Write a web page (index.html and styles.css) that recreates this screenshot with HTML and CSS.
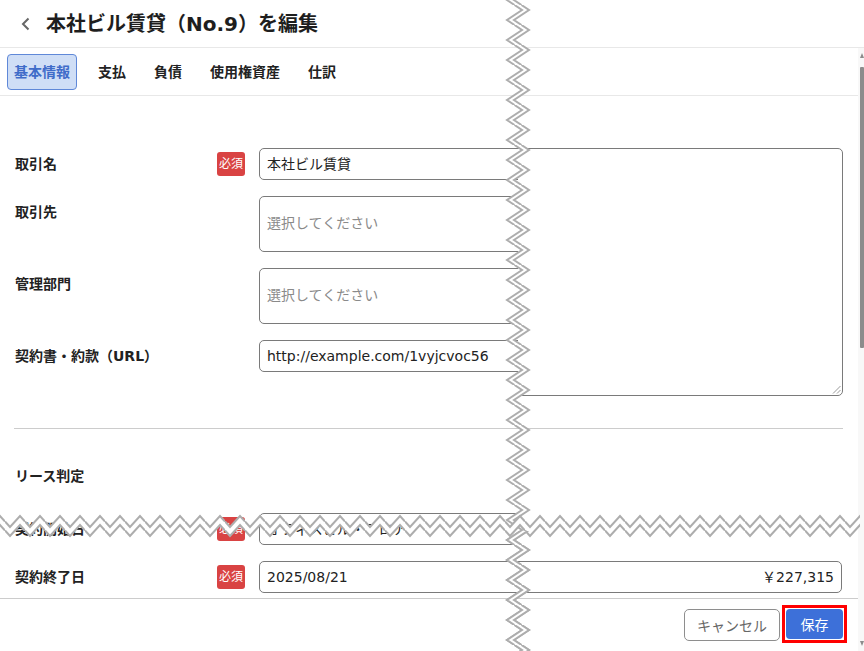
FILE: index.html
```html
<!DOCTYPE html>
<html lang="ja">
<head>
<meta charset="utf-8">
<title>本社ビル賃貸（No.9）を編集</title>
<link rel="stylesheet" href="styles.css">
</head>
<body>
<div class="page">
  <header class="header">
    <svg class="back" width="10" height="14" viewBox="0 0 10 14"><polyline points="7.5,1.5 2,7 7.5,12.5" fill="none" stroke="#666" stroke-width="2"/></svg>
    <h1 class="title">本社ビル賃貸（No.9）を編集</h1>
  </header>
  <div class="body">
    <div class="main">
      <nav class="tabs">
        <span class="tab active">基本情報</span>
        <span class="tab">支払</span>
        <span class="tab">負債</span>
        <span class="tab">使用権資産</span>
        <span class="tab">仕訳</span>
      </nav>
      <div class="form">
        <div class="slice left">
          <div class="row">
            <div class="label">取引名</div>
            <div class="req"><span class="badge">必須</span></div>
            <div class="field">本社ビル賃貸</div>
          </div>
          <div class="row">
            <div class="label">取引先</div>
            <div class="req"></div>
            <div class="field tall placeholder">選択してください</div>
          </div>
          <div class="row">
            <div class="label">管理部門</div>
            <div class="req"></div>
            <div class="field tall placeholder">選択してください</div>
          </div>
          <div class="row">
            <div class="label">契約書・約款（URL）</div>
            <div class="req"></div>
            <div class="field">http://example.com/1vyjcvoc56</div>
          </div>
          <div class="divider"></div>
          <h2 class="section">リース判定</h2>
          <div class="row first">
            <div class="label">契約開始日</div>
            <div class="req"><span class="badge">必須</span></div>
            <div class="field">オフィスビル・フロア</div>
          </div>
          <div class="row">
            <div class="label">契約終了日</div>
            <div class="req"><span class="badge">必須</span></div>
            <div class="field">2025/08/21</div>
          </div>
        </div>
        <div class="slice right">
          <div class="textarea">
            <svg class="resize" width="9" height="9" viewBox="0 0 9 9"><line x1="1" y1="8.5" x2="8.5" y2="1" stroke="#999" stroke-width="1"/><line x1="5" y1="8.5" x2="8.5" y2="5" stroke="#999" stroke-width="1"/></svg>
          </div>
          <div class="divider short"></div>
          <div class="field amount">￥227,315</div>
        </div>
      </div>
      <footer class="footer">
        <button class="btn cancel" type="button">キャンセル</button>
        <span class="focus-ring"><button class="btn save" type="button">保存</button></span>
      </footer>
    </div>
    <div class="scrollbar">
      <div class="arrow up"></div>
      <div class="thumb"></div>
      <div class="track-rest"></div>
      <div class="arrow down"></div>
    </div>
  </div>
  <svg class="tears" width="864" height="651" viewBox="0 0 864 651">
    <defs>
      <pattern id="vz" patternUnits="userSpaceOnUse" x="0" y="5" width="864" height="20">
        <polygon points="514.5,0 522,5 507,15 514.5,20 521.5,20 514,15 529,5 521.5,0" fill="#fff"/>
        <polyline points="514.5,0 522,5 507,15 514.5,20" fill="none" stroke="#adadad" stroke-width="2"/>
        <polyline points="521.5,0 529,5 514,15 521.5,20" fill="none" stroke="#adadad" stroke-width="2"/>
      </pattern>
      <pattern id="hz" patternUnits="userSpaceOnUse" x="5" y="0" width="20" height="651">
        <polygon points="0,521.5 5,527 15,516 20,521.5 20,530.5 15,525 5,536 0,530.5" fill="#fff"/>
        <polyline points="0,521.5 5,527 15,516 20,521.5" fill="none" stroke="#adadad" stroke-width="2"/>
        <polyline points="0,530.5 5,536 15,525 20,530.5" fill="none" stroke="#adadad" stroke-width="2"/>
      </pattern>
    </defs>
    <rect x="500" y="0" width="36" height="651" fill="url(#vz)"/>
    <rect x="0" y="508" width="860" height="34" fill="url(#hz)"/>
    <rect x="500" y="531" width="36" height="120" fill="url(#vz)"/>
  </svg>
</div>
</body>
</html>
```

FILE: styles.css
```css
* {
  box-sizing: border-box;
  margin: 0;
  padding: 0;
}

html,
body {
  width: 864px;
  height: 651px;
  overflow: hidden;
  background: #fff;
}

body {
  font-family: "DejaVu Sans", "Noto Sans CJK JP", sans-serif;
  font-size: 14px;
  color: #222;
}

.page {
  position: relative;
  width: 864px;
  height: 651px;
}

/* header */
.header {
  height: 48px;
  border-bottom: 1px solid #e8e8e8;
  display: flex;
  align-items: center;
  padding-left: 21px;
}

.back {
  display: block;
  flex: none;
  margin-right: 15px;
}

.title {
  font-size: 20px;
  font-weight: 700;
  line-height: 28px;
  color: #1e1e1e;
}

/* body */
.body {
  display: flex;
  height: 603px;
}

.main {
  width: 858px;
  flex: none;
  display: flex;
  flex-direction: column;
}

.tabs {
  height: 48px;
  flex: none;
  border-bottom: 1px solid #e8e8e8;
  display: flex;
  gap: 14px;
  padding: 6px 7px 0;
}

.tab {
  height: 36px;
  padding: 0 6px;
  border: 1px solid transparent;
  border-radius: 4px;
  font-weight: 700;
  line-height: 34px;
  color: #222;
}

.tab.active {
  background: #cfdef6;
  border-color: #5f88d8;
  color: #3f6cc9;
}

.form {
  flex: 1;
  min-height: 0;
  display: flex;
  overflow: hidden;
}

.slice {
  flex: none;
  overflow: hidden;
}

.slice.left {
  width: 518px;
  padding: 52px 0 0 15px;
}

.slice.right {
  width: 340px;
  padding-top: 52px;
}

.row {
  display: grid;
  grid-template-columns: 202px 42px 583px;
  margin-bottom: 16px;
}

.row.first {
  margin-top: 27px;
}

.label {
  font-weight: 700;
  line-height: 32px;
  color: #222;
  white-space: nowrap;
}

.badge {
  display: block;
  width: 28px;
  height: 24px;
  margin-top: 4px;
  border-radius: 3px;
  background: #d94343;
  color: #fff;
  font-size: 12px;
  line-height: 24px;
  text-align: center;
}

.field {
  height: 32px;
  border: 1px solid #7a7a7a;
  border-radius: 5px;
  padding: 0 7px;
  line-height: 30px;
  color: #222;
  white-space: nowrap;
  overflow: hidden;
}

.field.tall {
  height: 56px;
  display: flex;
  align-items: center;
  padding-bottom: 3px;
}

.placeholder {
  color: #8a8a8a;
}

.divider {
  height: 1px;
  width: 829px;
  margin: 56px 0 0 -1px;
  background: #cccccc;
}

.section {
  margin-top: 37px;
  font-size: 14px;
  font-weight: 700;
  line-height: 20px;
  color: #222;
}

.textarea {
  position: relative;
  margin-left: -20px;
  width: 345px;
  height: 248px;
  border: 1px solid #7a7a7a;
  border-radius: 5px;
}

.resize {
  position: absolute;
  right: 1px;
  bottom: 1px;
  display: block;
}

.divider.short {
  width: 325px;
  margin: 32px 0 0 0;
}

.field.amount {
  margin-top: 132px;
  margin-left: -20px;
  width: 344px;
  text-align: right;
}

/* footer */
.footer {
  height: 53px;
  flex: none;
  border-top: 1px solid #cccccc;
  display: flex;
  justify-content: flex-end;
  align-items: flex-start;
  gap: 2px;
  padding: 6px 11px 0;
}

.btn {
  font-family: "DejaVu Sans", "Noto Sans CJK JP", sans-serif;
  font-size: 14px;
  cursor: pointer;
}

.btn.cancel {
  width: 96px;
  height: 32px;
  margin-top: 4px;
  border: 1px solid #8e8e8e;
  border-radius: 5px;
  background: #fff;
  color: #666;
}

.focus-ring {
  display: block;
  border: 3px solid #ff0000;
  padding: 1px;
}

.btn.save {
  display: block;
  width: 57px;
  height: 30px;
  border: none;
  border-radius: 4px;
  background: #3d70d9;
  color: #fff;
}

/* scrollbar */
.scrollbar {
  width: 6px;
  flex: none;
  background: #f8f8f8;
  display: flex;
  flex-direction: column;
  align-items: flex-end;
  padding: 5px 0 5px;
}

.arrow {
  width: 0;
  height: 0;
  border-left: 2px solid transparent;
  border-right: 2px solid transparent;
}

.arrow.up {
  border-bottom: 5px solid #8c8c8c;
}

.arrow.down {
  border-top: 5px solid #8c8c8c;
}

.thumb {
  width: 4px;
  height: 281px;
  margin-top: 9px;
  background: #8c8c8c;
  border-radius: 1px;
}

.track-rest {
  flex: 1;
}

/* torn-screenshot markers */
.tears {
  position: absolute;
  left: 0;
  top: 0;
  display: block;
  pointer-events: none;
}
```
